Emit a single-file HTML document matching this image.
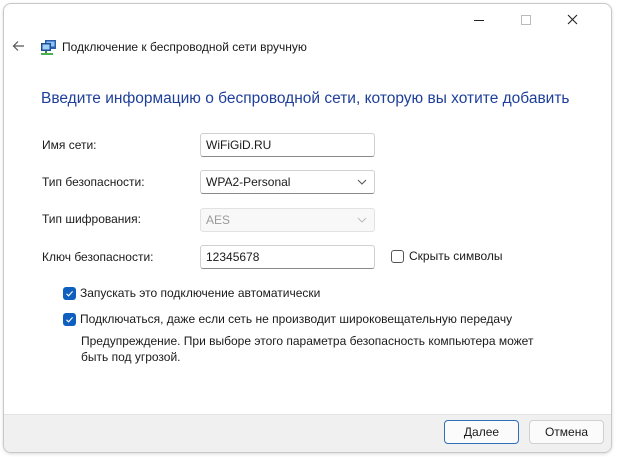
<!DOCTYPE html>
<html><head><meta charset="utf-8"><style>
*{box-sizing:border-box;margin:0;padding:0}
body{width:617px;height:457px;background:#f3f3f3;font-family:"Liberation Sans","DejaVu Sans",sans-serif;font-size:12px;color:#1a1a1a;position:relative;overflow:hidden}
.bg{position:absolute;left:0;top:0;width:617px;height:457px;background:#fff}
.win{position:absolute;left:3px;top:3px;width:609px;height:450px;background:#fff;border:1px solid #c8c8c8;border-radius:8px;overflow:hidden;box-shadow:0 1px 3px rgba(0,0,0,.15)}
.abs{position:absolute}
.title{left:58px;top:36px;font-size:12px;color:#1a1a1a}
.h{left:37px;top:86px;font-size:15.5px;color:#1e3f9a}
.lbl{left:38px;font-size:12px}
.inp{left:196px;width:175px;height:24px;border:1px solid #d0d0d0;border-bottom:1px solid #8a8a8a;border-radius:3px;background:#fff;padding:4px 5px;font-size:12px}
.dis{background:#f8f8f8;border:1px solid #e2e2e2;color:#9a9a9a}
.arr{position:absolute;right:7px;top:8px}
.cb{width:13px;height:13px;border-radius:3px;background:#0f5fbf}
.foot{left:0;top:410px;width:609px;height:40px;background:#f0f0f0;border-top:1px solid #e3e3e3}
.btn{top:416px;width:75px;height:24px;border:1px solid #d0d0d0;border-radius:4px;background:#fbfbfb;text-align:center;line-height:22px;font-size:12px}
</style></head><body>
<div class="bg"></div>
<div class="win">
 <svg class="abs" style="left:470px;top:9px" width="130" height="16"><line x1="0" y1="7.5" x2="10" y2="7.5" stroke="#222"/><rect x="47.5" y="2.5" width="9" height="9" fill="none" stroke="#bbb"/><path d="M94 2L103 11M103 2L94 11" stroke="#222" stroke-width="1.1"/></svg>
 <svg class="abs" style="left:8px;top:36px" width="14" height="12"><path d="M12 6H2M6 1.5L1.5 6L6 10.5" fill="none" stroke="#555" stroke-width="1.2"/></svg>
 <svg class="abs" style="left:36px;top:35px" width="18" height="16"><rect x="5" y="1" width="11" height="9" fill="#2a5fb0"/><rect x="6.5" y="2.5" width="8" height="5" fill="#8fc3ef"/><rect x="1" y="4" width="10" height="8" fill="#1f4e96"/><rect x="2.5" y="5.5" width="7" height="5" fill="#9fd0f5"/><rect x="5" y="12" width="2" height="2" fill="#3a8a3a"/><rect x="1" y="14" width="12" height="2" fill="#4caf50"/></svg>
 <div class="abs title">Подключение к беспроводной сети вручную</div>
 <div class="abs h">Введите информацию о беспроводной сети, которую вы хотите добавить</div>
 <div class="abs lbl" style="top:134px">Имя сети:</div>
 <div class="abs inp" style="top:129px">WiFiGiD.RU</div>
 <div class="abs lbl" style="top:171px">Тип безопасности:</div>
 <div class="abs inp" style="top:166px">WPA2-Personal<svg class="arr" width="10" height="6"><path d="M1 1L5 5L9 1" fill="none" stroke="#555"/></svg></div>
 <div class="abs lbl" style="top:208px">Тип шифрования:</div>
 <div class="abs inp dis" style="top:204px">AES<svg class="arr" width="10" height="6"><path d="M1 1L5 5L9 1" fill="none" stroke="#bbb"/></svg></div>
 <div class="abs lbl" style="top:246px">Ключ безопасности:</div>
 <div class="abs inp" style="top:241px">12345678</div>
 <div class="abs" style="left:387px;top:246px;width:13px;height:13px;border:1px solid #555;border-radius:3px"></div>
 <div class="abs" style="left:405px;top:245px">Скрыть символы</div>
 <div class="abs cb" style="left:59px;top:283px"><svg width="13" height="13"><path d="M3.5 6.8L5.6 8.8L9.6 4.4" fill="none" stroke="#fff" stroke-width="1.1"/></svg></div>
 <div class="abs" style="left:76px;top:282px">Запускать это подключение автоматически</div>
 <div class="abs cb" style="left:59px;top:309px"><svg width="13" height="13"><path d="M3.5 6.8L5.6 8.8L9.6 4.4" fill="none" stroke="#fff" stroke-width="1.1"/></svg></div>
 <div class="abs" style="left:76px;top:308px">Подключаться, даже если сеть не производит широковещательную передачу</div>
 <div class="abs" style="left:77px;top:329px;line-height:16px">Предупреждение. При выборе этого параметра безопасность компьютера может<br>быть под угрозой.</div>
 <div class="abs foot"></div>
 <div class="abs btn" style="left:440px;border:1.5px solid #2f6fb5">Далее</div>
 <div class="abs btn" style="left:525px">Отмена</div>
</div>
</body></html>
